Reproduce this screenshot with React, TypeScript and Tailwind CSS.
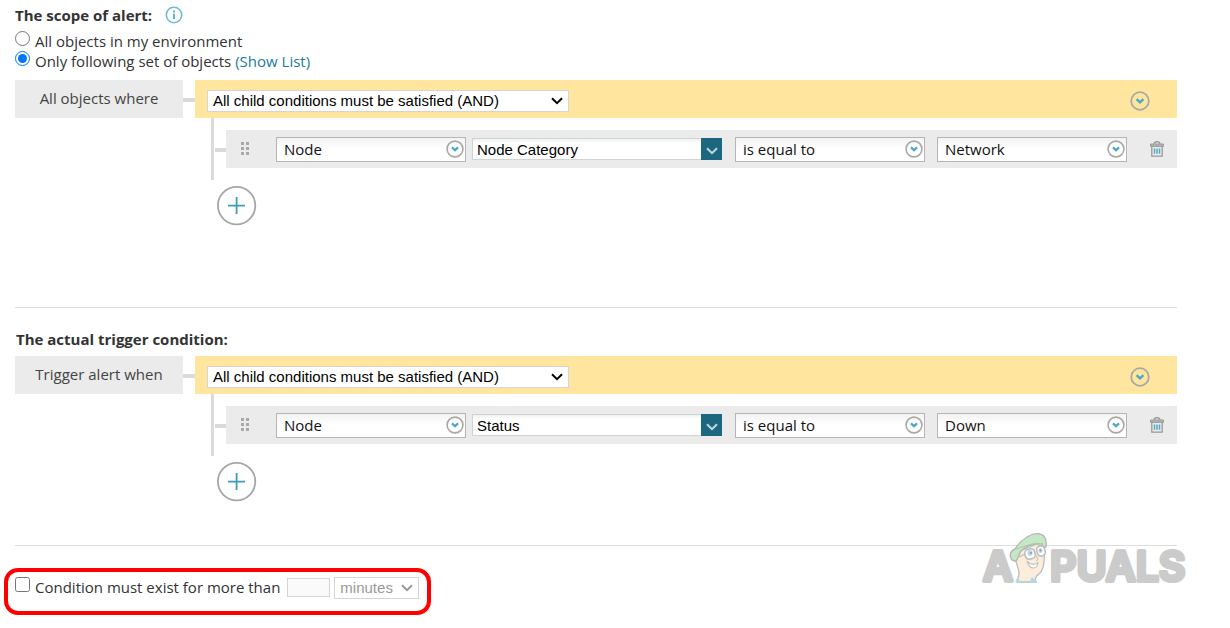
import React from "react";

function CircleChevron({ className }: { className: string }) {
  return (
    <svg viewBox="0 0 20 20" className={className} fill="none" aria-hidden="true">
      <circle cx="10" cy="10" r="8.8" stroke="#a9a9a6" strokeWidth="1.8" />
      <path d="M6.6 8.2 10 11.3l3.4-3.1" stroke="#4ba8c6" strokeWidth="2.4" />
    </svg>
  );
}

function Chevron({ className }: { className: string }) {
  return (
    <svg viewBox="0 0 12 8" className={className} fill="none" aria-hidden="true">
      <path d="m1 1.2 5 5 5-5" stroke="currentColor" strokeWidth="2" />
    </svg>
  );
}

function NativeSelect({ label, value, className, disabled }: { label: string; value: string; className: string; disabled?: boolean }) {
  return (
    <div className={`grid items-center font-['Liberation_Sans',Arial,sans-serif] text-[15px] leading-5 ${className}`}>
      <select
        aria-label={label}
        disabled={disabled}
        className="col-start-1 row-start-1 h-[22px] w-full appearance-none border border-[#d5d5d5] bg-white pl-[5px] opacity-100"
      >
        <option>{value}</option>
      </select>
      <Chevron className="pointer-events-none col-start-1 row-start-1 mr-[6px] h-2 w-3 justify-self-end" />
    </div>
  );
}

function Combo({ label, value }: { label: string; value: string }) {
  return (
    <div className="grid w-[190px] shrink-0 items-center">
      <select
        aria-label={label}
        className="col-start-1 row-start-1 h-[25px] w-full appearance-none border border-[#b5b5b5] bg-linear-to-b from-[#f3f3f3] to-white to-50% pl-[7px] text-[15px] leading-5 text-[#111]"
      >
        <option>{value}</option>
      </select>
      <CircleChevron className="pointer-events-none col-start-1 row-start-1 mr-[2px] size-[18px] justify-self-end" />
    </div>
  );
}

function DragHandle() {
  return (
    <svg viewBox="0 0 8 14" className="h-[14px] w-2" fill="#a9a9a9" aria-hidden="true">
      <path d="M0 0h3v3H0zM5 0h3v3H5zM0 5h3v3H0zM5 5h3v3H5zM0 10h3v3H0zM5 10h3v3H5z" />
    </svg>
  );
}

function TrashIcon() {
  return (
    <svg viewBox="0 0 14 16" className="h-4 w-[14px]" fill="none" aria-hidden="true">
      <path d="M4.2 2.8C4.2 1.3 5 .8 7 .8s2.8.5 2.8 2" stroke="#999" strokeWidth="1.4" />
      <path d="M.6 3h12.8v2.4H.6z" fill="#b5b5b5" stroke="#999" strokeWidth="1" />
      <path d="M1.8 5.5v9.7h10.4V5.5" stroke="#999" strokeWidth="1.3" />
      <path d="M4.5 7.5v5.3M7 7.5v5.3M9.5 7.5v5.3" stroke="#55a9c6" strokeWidth="1.5" />
    </svg>
  );
}

function ConditionGroup({ title, field, value }: { title: string; field: string; value: string }) {
  return (
    <div className="flex items-start">
      <div className="flex h-[38px] w-[168px] shrink-0 items-center justify-center bg-[#ebebeb] pb-[2px] text-[#444]">{title}</div>
      <div className="mt-[18px] h-1 w-3 shrink-0 bg-[#dadada]" />
      <div className="min-w-0 flex-1">
        <div className="flex h-[38px] items-center justify-between bg-[#ffe59e] pr-[27px] pl-3">
          <NativeSelect label={title} value="All child conditions must be satisfied (AND)" className="mt-1 w-[362px] text-black" />
          <button aria-label="Group options" className="mt-1">
            <CircleChevron className="size-5" />
          </button>
        </div>
        <div className="flex items-start pl-4">
          <div className="h-[62px] w-[3px] shrink-0 bg-[#dadada]" />
          <div className="mt-[30px] ml-px h-1 w-[11px] shrink-0 bg-[#dadada]" />
          <div className="mt-3 flex h-[38px] min-w-0 flex-1 items-center bg-[#ebebeb] pr-[13px] pl-[15px]">
            <button aria-label="Move condition" className="mr-[27px]">
              <DragHandle />
            </button>
            <Combo label="Object type" value="Node" />
            <div className="mr-[13px] ml-[6px] flex h-[22px] min-w-0 flex-1">
              <input
                aria-label="Field"
                defaultValue={field}
                className="min-w-0 flex-1 border border-r-0 border-[#d0d4d6] bg-linear-to-b from-[#edf1f2] to-white to-20% pt-[2px] pl-1 font-['Liberation_Sans',Arial,sans-serif] text-[15px] leading-[18px] text-black"
              />
              <button aria-label="Choose field" className="grid w-[21px] place-items-center bg-[#1d6680] pt-1 text-[#c3d7de]">
                <Chevron className="h-2 w-3" />
              </button>
            </div>
            <Combo label="Operator" value="is equal to" />
            <div className="w-3 shrink-0" />
            <Combo label="Value" value={value} />
            <button aria-label="Delete condition" className="ml-[23px]">
              <TrashIcon />
            </button>
          </div>
        </div>
        <button aria-label="Add condition" className="mt-[6px] ml-[22px] block">
          <svg viewBox="0 0 40 40" className="size-10" fill="none" aria-hidden="true">
            <circle cx="19.6" cy="19.6" r="18.7" stroke="#a6a6a6" strokeWidth="1.8" />
            <path d="M19.6 11v17M11 19.6h17" stroke="#3a9dbd" strokeWidth="1.8" />
          </svg>
        </button>
      </div>
    </div>
  );
}

function Watermark() {
  return (
    <svg viewBox="0 0 216 68" className="pointer-events-none absolute -top-4 right-[34px] h-[68px] w-[216px]" role="img" aria-label="Appuals">
      <g fill="#cbcbcb" stroke="#cbcbcb" strokeWidth="4" strokeLinejoin="round" fontFamily="Inter, sans-serif" fontWeight="600" fontSize="41">
        <text x="3" y="51">A</text>
        <text x="70" y="51">PUALS</text>
      </g>
      <g transform="translate(3 0)">
        <path d="M32 27c1 7 4 11 4 17l-2 8h19c-2-4 0-6 3-8 5-4 6-13 5-25l-7-5-17 7z" fill="#fbeddb" stroke="#bdbdbd" strokeWidth="1.3" />
        <path d="M29 30c-3-4-2-9 3-11C38 9 50 2 57 4c5 1 7 5 6 13h-3l-1-3c-7-1-14 1-20 6-3 2-2 5-4 7-2 5-1 4-3 4z" fill="#c4e8c5" stroke="#b7b7b7" strokeWidth="1.4" strokeLinejoin="round" />
        <path d="M33 19c9-3 15-6 27-5" stroke="#a9cbaa" strokeWidth="1" fill="none" />
        <path d="m36 27 6-3" stroke="#bdbdbd" strokeWidth="1.2" />
        <rect x="42" y="19" width="10" height="10" rx="4" fill="#fff" stroke="#bdbdbd" strokeWidth="1.6" transform="rotate(-15 47 24)" />
        <rect x="54" y="16" width="8" height="10" rx="3.5" fill="#fff" stroke="#bdbdbd" strokeWidth="1.6" transform="rotate(-15 58 21)" />
        <ellipse cx="47" cy="23" rx="2.6" ry="3" fill="#b7d9e8" />
        <ellipse cx="57.5" cy="20.5" rx="2" ry="2.6" fill="#b7d9e8" />
        <circle cx="48" cy="23" r="1.1" fill="#999" />
        <circle cx="57.5" cy="20.5" r="1.1" fill="#999" />
        <path d="M53 26c2 2 3 4 0 5" fill="none" stroke="#d9bfb0" strokeWidth="1.1" />
        <path d="M44 31c3 4 7 4 11 2-1 6-8 8-11-2z" fill="#fff" stroke="#bdbdbd" strokeWidth="1.1" />
        <path d="m32 52 2-4 5 4zM46 52l3-5 5 5z" fill="#afdced" />
      </g>
    </svg>
  );
}

export default function App() {
  return (
    <main className="min-h-screen overflow-x-hidden bg-white font-['Open_Sans',sans-serif] text-[15px] leading-5 text-[#333]">
      <section className="mr-[53px] ml-[15px] border-b border-[#dcdcdc] pt-[5px] pb-[81px]">
        <div className="flex h-5 items-center gap-[13px]">
          <h2 className="font-bold">The scope of alert:</h2>
          <svg viewBox="0 0 18 18" className="size-[18px]" fill="none" aria-hidden="true">
            <circle cx="9" cy="9" r="7.7" stroke="#70b8d7" strokeWidth="1.6" />
            <path d="M9 4.5v2M9 7.7v5.6" stroke="#62b0d2" strokeWidth="2" />
          </svg>
        </div>
        <div className="mt-[6px] flex items-start gap-[5px]">
          <input id="all" type="radio" name="scope" className="size-[15px]" />
          <label htmlFor="all">All objects in my environment</label>
        </div>
        <div className="mb-[9px] flex items-start gap-[5px]">
          <input id="some" type="radio" name="scope" defaultChecked className="size-[15px]" />
          <div>
            <label htmlFor="some">Only following set of objects</label>{" "}
            <a href="#list" className="text-[#187a9f]">(Show List)</a>
          </div>
        </div>
        <ConditionGroup title="All objects where" field="Node Category" value="Network" />
      </section>

      <section className="mr-[53px] ml-[15px] border-b border-[#dcdcdc] pt-[21px] pb-[43px]">
        <h2 className="mb-[7px] pl-px font-bold">The actual trigger condition:</h2>
        <ConditionGroup title="Trigger alert when" field="Status" value="Down" />
      </section>

      <footer className="relative pt-[22px] pl-1">
        <div className="flex h-[47px] w-fit items-start rounded-[14px] border-4 border-[#fe0000] pt-[5px] pr-2 pl-[7px]">
          <input id="duration" type="checkbox" className="size-[15px]" />
          <label htmlFor="duration" className="ml-[5px]">Condition must exist for more than</label>
          <input aria-label="Duration" disabled className="mt-px ml-[7px] h-[19px] w-[43px] border border-[#d5d5d5] bg-[#fafafa]" />
          <NativeSelect label="Duration unit" value="minutes" disabled className="ml-1 w-[85px] text-[#999]" />
        </div>
        <Watermark />
      </footer>
    </main>
  );
}
